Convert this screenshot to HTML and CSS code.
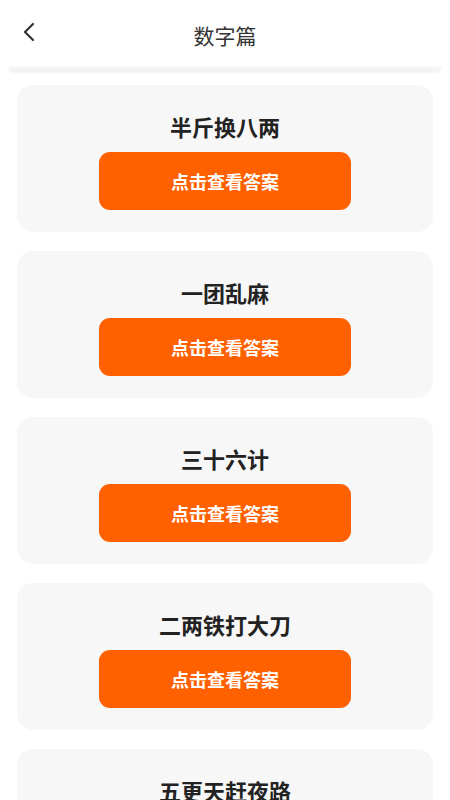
FILE: index.html
```html
<!DOCTYPE html>
<html lang="zh-CN">
<head>
<meta charset="utf-8">
<title>数字篇</title>
<link rel="stylesheet" href="styles.css">
</head>
<body>
<div class="page">
  <header class="header">
    <span class="back">
      <svg width="14" height="20" viewBox="0 0 14 20"><path d="M11 2 L3 10 L11 18" fill="none" stroke="#333" stroke-width="2.2" stroke-linecap="round" stroke-linejoin="round"/></svg>
    </span>
    <h1 class="title">数字篇</h1>
  </header>
  <div class="shade"></div>
  <main class="list">
    <section class="card">
      <h2 class="card-title">半斤换八两</h2>
      <button class="btn">点击查看答案</button>
    </section>
    <section class="card">
      <h2 class="card-title">一团乱麻</h2>
      <button class="btn">点击查看答案</button>
    </section>
    <section class="card">
      <h2 class="card-title">三十六计</h2>
      <button class="btn">点击查看答案</button>
    </section>
    <section class="card">
      <h2 class="card-title">二两铁打大刀</h2>
      <button class="btn">点击查看答案</button>
    </section>
    <section class="card">
      <h2 class="card-title">五更天赶夜路</h2>
      <button class="btn">点击查看答案</button>
    </section>
  </main>
</div>
</body>
</html>
```

FILE: styles.css
```css
html, body {
  margin: 0;
  padding: 0;
  background: #ffffff;
  font-family: "Noto Sans CJK SC", "Noto Sans", sans-serif;
}
.page {
  width: 450px;
  height: 800px;
  overflow: hidden;
}
.header {
  position: relative;
  height: 67px;
  display: flex;
  align-items: center;
  justify-content: center;
}
.back {
  position: absolute;
  left: 22px;
  top: 22px;
  width: 14px;
  height: 20px;
  display: flex;
}
.title {
  margin: 0;
  font-size: 21px;
  font-weight: 400;
  color: #333333;
  line-height: 28px;
  margin-top: 2px;
}
.shade {
  height: 6px;
  margin: 0 8px;
  background: #f3f3f3;
  border-radius: 0 0 8px 8px;
  filter: blur(1px);
}
.list {
  display: flex;
  flex-direction: column;
  gap: 19px;
  padding: 12px 17px 0;
}
.card {
  flex: none;
  height: 147px;
  box-sizing: border-box;
  background: #f7f7f7;
  border-radius: 16px;
  padding-top: 26px;
  display: flex;
  flex-direction: column;
  align-items: center;
}
.card-title {
  margin: 0;
  font-size: 22px;
  line-height: 30px;
  font-weight: 700;
  color: #222222;
}
.btn {
  margin-top: 11px;
  width: 252px;
  height: 58px;
  border: none;
  border-radius: 11px;
  background: #ff6000;
  color: #ffffff;
  font-family: "Noto Sans CJK SC", "Noto Sans", sans-serif;
  font-size: 18px;
  font-weight: 700;
  padding: 0;
}
```
